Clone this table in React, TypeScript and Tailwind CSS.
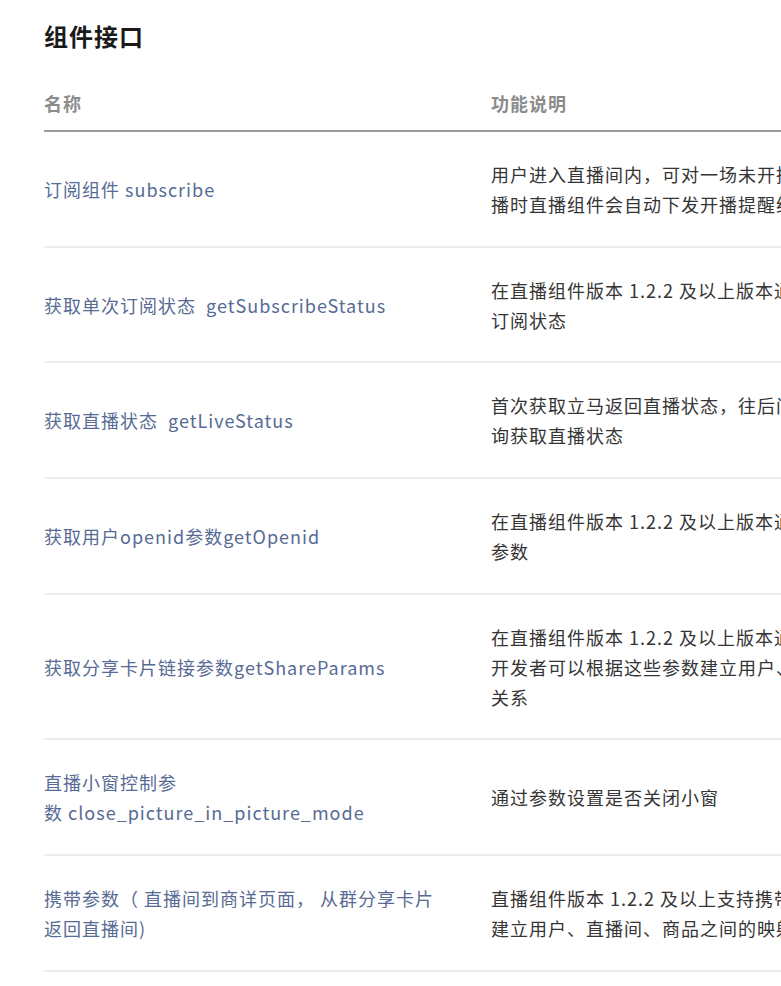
import React from "react";

const rows = [
  {
    name: ["订阅组件 subscribe"],
    desc: [
      "用户进入直播间内，可对一场未开播的直播进行订阅，开",
      "播时直播组件会自动下发开播提醒给用户",
    ],
  },
  {
    name: ["获取单次订阅状态\u00a0 getSubscribeStatus"],
    desc: ["在直播组件版本 1.2.2 及以上版本通过该接口获取用户单次", "订阅状态"],
  },
  {
    name: ["获取直播状态\u00a0 getLiveStatus"],
    desc: ["首次获取立马返回直播状态，往后间隔1分钟或更短时间轮", "询获取直播状态"],
  },
  {
    name: ["获取用户openid参数getOpenid"],
    desc: ["在直播组件版本 1.2.2 及以上版本通过该接口获取用户openid", "参数"],
  },
  {
    name: ["获取分享卡片链接参数getShareParams"],
    desc: [
      "在直播组件版本 1.2.2 及以上版本通过该接口获取分享卡片链接参数，",
      "开发者可以根据这些参数建立用户、直播间、分享卡片之间的映射",
      "关系",
    ],
  },
  {
    name: ["直播小窗控制参", "数\u00a0close_picture_in_picture_mode"],
    desc: ["通过参数设置是否关闭小窗"],
  },
  {
    name: ["携带参数（ 直播间到商详页面， 从群分享卡片", "返回直播间)"],
    desc: [
      "直播组件版本 1.2.2 及以上支持携带参数，开发者可以根据这些参数",
      "建立用户、直播间、商品之间的映射关系",
    ],
  },
];

const App = () => {
  return (
    <div className="h-[986px] w-[781px] overflow-hidden bg-white font-['Noto_Sans_CJK_SC',sans-serif]">
      <div className="w-[1200px] pl-[44px] pt-[20px]">
        <h2 className="mb-[23px] text-[24px] font-bold leading-[32px] tracking-[1px] text-[#1a1a1a]">
          组件接口
        </h2>

        <table className="w-[1100px] border-collapse text-left text-[18px] leading-[30px] tracking-[1px]">
          <thead>
            <tr className="border-b-2 border-[#9a9a9a]">
              <th className="w-[447px] pt-[13px] pb-[12px] font-bold text-[#8c8c8c]">名称</th>
              <th className="pt-[13px] pb-[12px] font-bold text-[#8c8c8c]">功能说明</th>
            </tr>
          </thead>
          <tbody>
            {rows.map((row, i) => (
              <tr key={i} className="border-b-2 border-[#ededed]">
                <td className="py-[26.85px] align-middle text-[#576b95]">
                  {row.name.map((line) => (
                    <div key={line} className="whitespace-nowrap">
                      {line}
                    </div>
                  ))}
                </td>
                <td className="py-[26.85px] align-middle text-[#353535]">
                  {row.desc.map((line) => (
                    <div key={line} className="whitespace-nowrap">
                      {line}
                    </div>
                  ))}
                </td>
              </tr>
            ))}
          </tbody>
        </table>
      </div>
    </div>
  );
};

export default App;
